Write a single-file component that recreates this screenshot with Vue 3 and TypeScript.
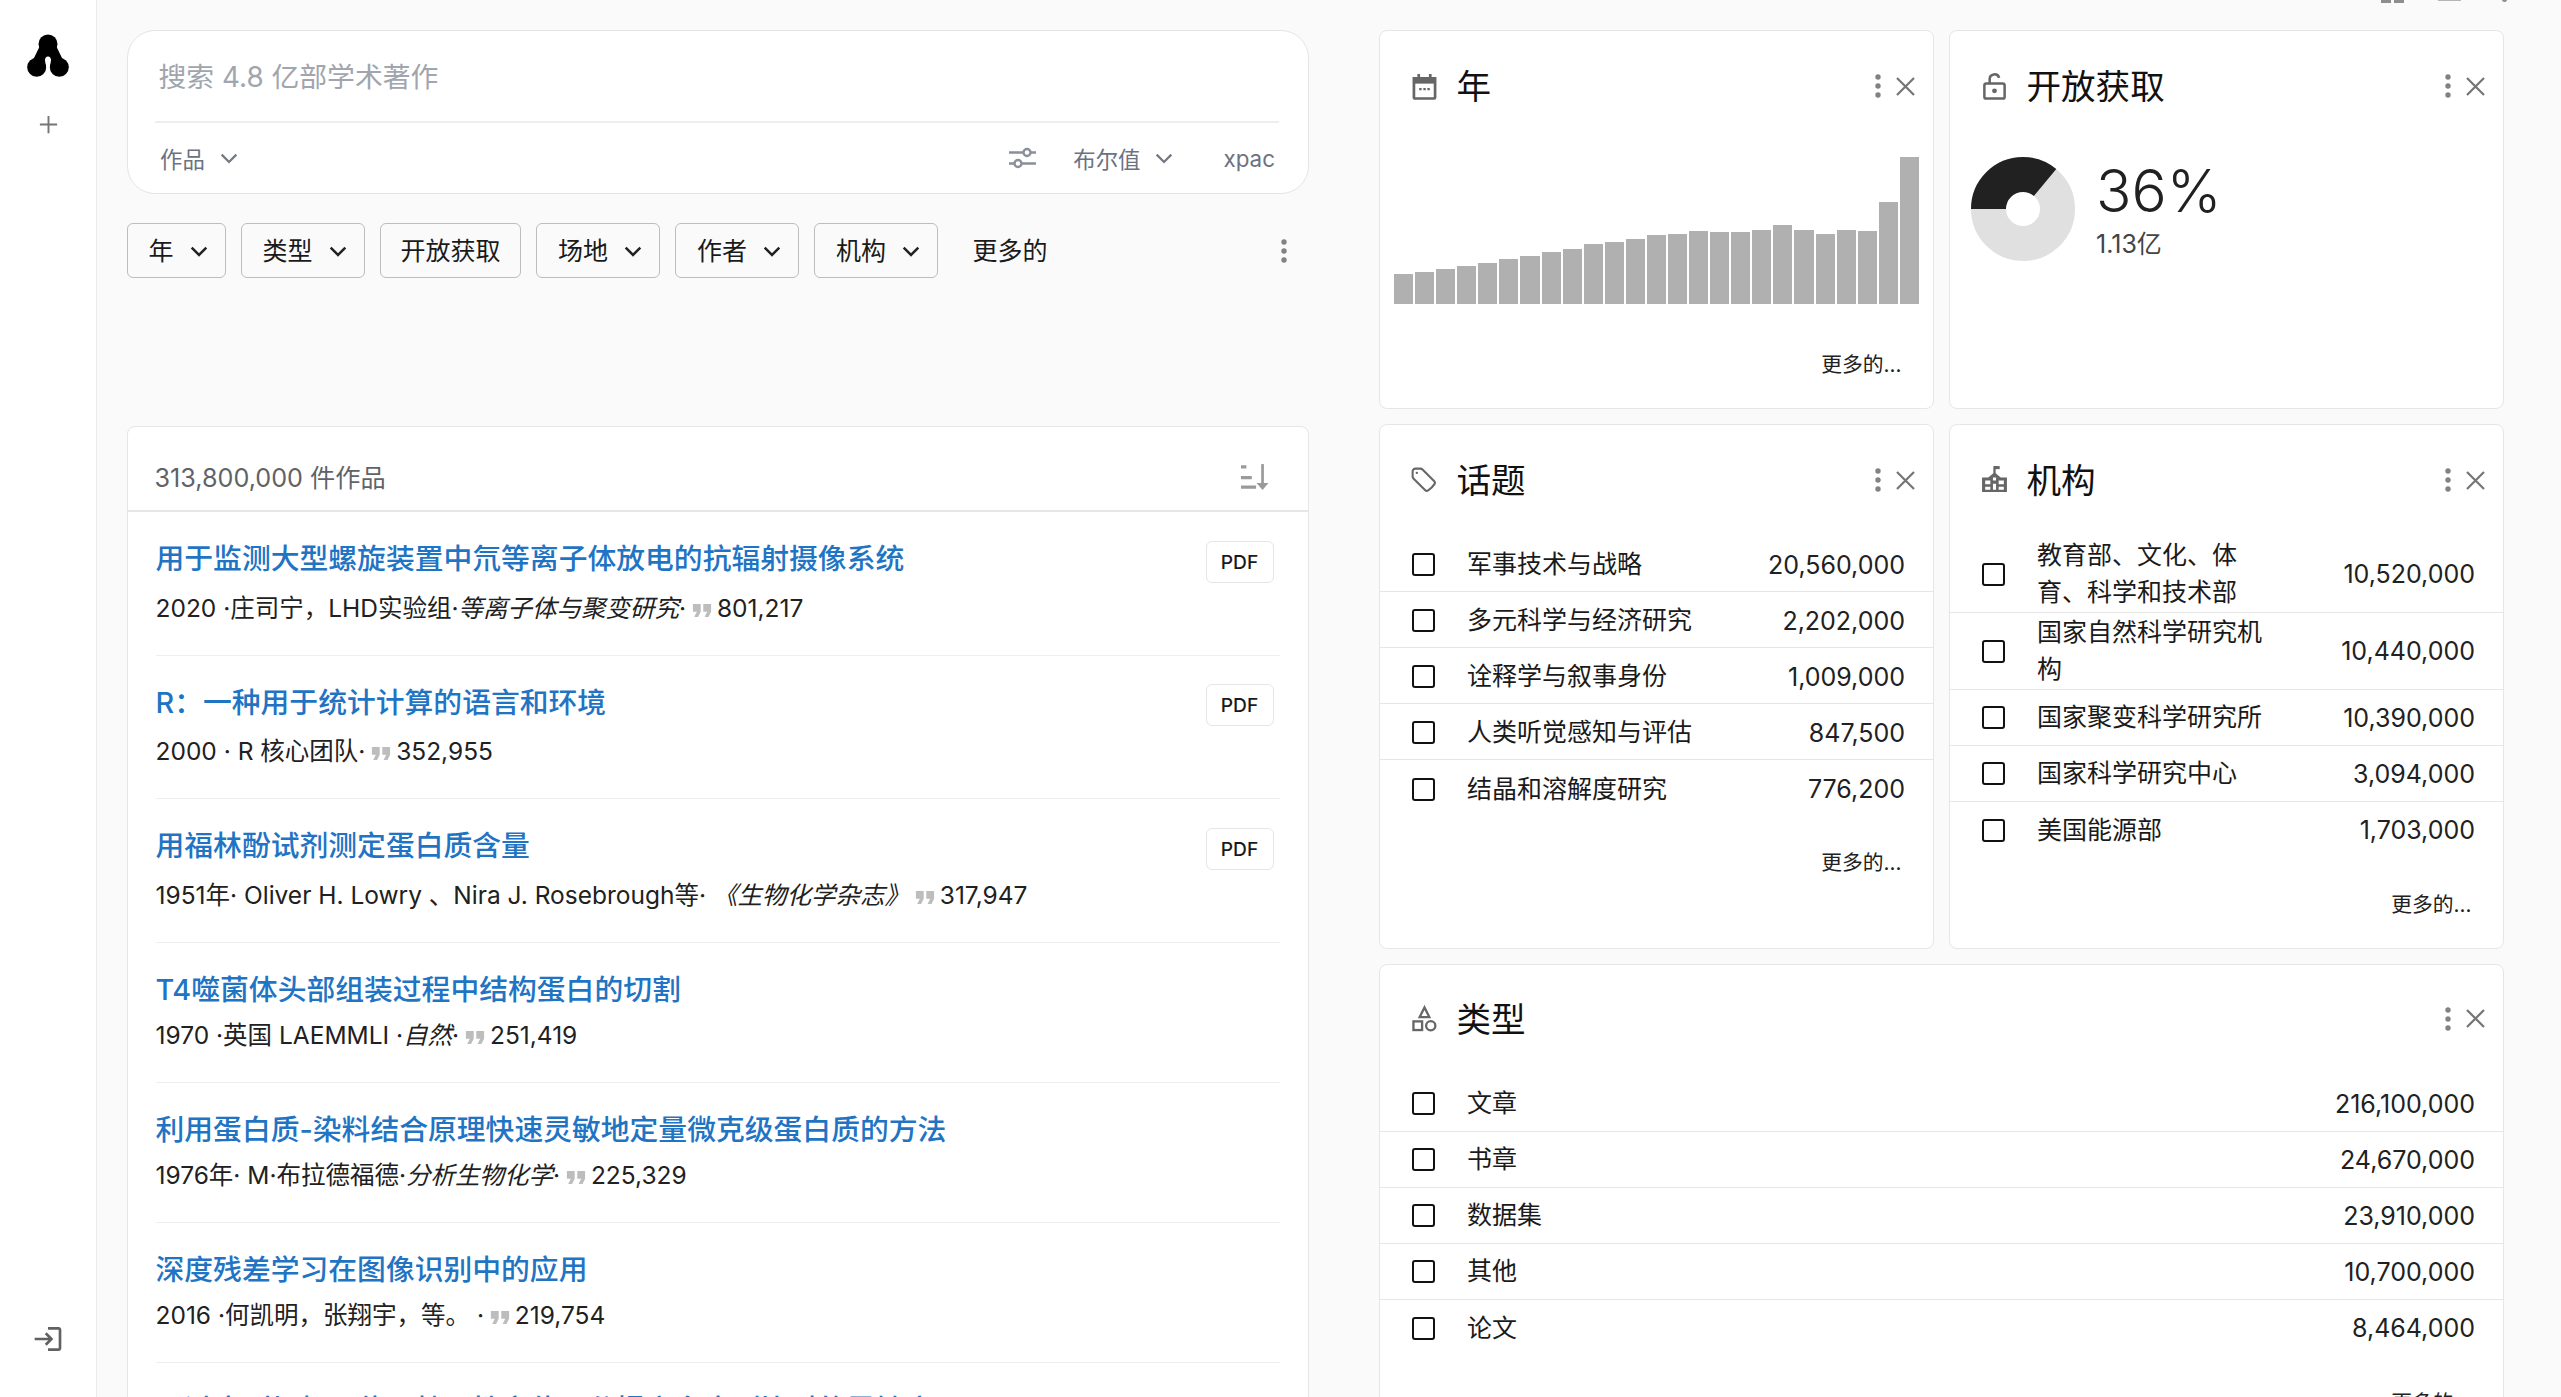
<script setup lang="ts">
interface Work {
  title: string
  pre: string
  venue?: string
  post?: string
  cites?: string
  pdf?: boolean
}
interface Item {
  label: string
  value: string
}

const filters = [
  { label: '年', menu: true },
  { label: '类型', menu: true },
  { label: '开放获取', menu: false },
  { label: '场地', menu: true },
  { label: '作者', menu: true },
  { label: '机构', menu: true },
]

const works: Work[] = [
  { title: '用于监测大型螺旋装置中氘等离子体放电的抗辐射摄像系统', pre: '2020 ·庄司宁，LHD实验组·', venue: '等离子体与聚变研究', post: '·', cites: '801,217', pdf: true },
  { title: 'R：一种用于统计计算的语言和环境', pre: '2000 · R 核心团队·', cites: '352,955', pdf: true },
  { title: '用福林酚试剂测定蛋白质含量', pre: '1951年· Oliver H. Lowry 、Nira J. Rosebrough等· ', venue: '《生物化学杂志》', cites: '317,947', pdf: true },
  { title: 'T4噬菌体头部组装过程中结构蛋白的切割', pre: '1970 ·英国 LAEMMLI ·', venue: '自然', post: '·', cites: '251,419' },
  { title: '利用蛋白质-染料结合原理快速灵敏地定量微克级蛋白质的方法', pre: '1976年· M·布拉德福德·', venue: '分析生物化学', post: '·', cites: '225,329' },
  { title: '深度残差学习在图像识别中的应用', pre: '2016 ·何凯明，张翔宇，等。 ·', cites: '219,754' },
  { title: '通过序列加权、位置特异性空位罚分提高多序列比对的灵敏度', pre: '' },
]

const topics: Item[] = [
  { label: '军事技术与战略', value: '20,560,000' },
  { label: '多元科学与经济研究', value: '2,202,000' },
  { label: '诠释学与叙事身份', value: '1,009,000' },
  { label: '人类听觉感知与评估', value: '847,500' },
  { label: '结晶和溶解度研究', value: '776,200' },
]
const institutions: Item[] = [
  { label: '教育部、文化、体育、科学和技术部', value: '10,520,000' },
  { label: '国家自然科学研究机构', value: '10,440,000' },
  { label: '国家聚变科学研究所', value: '10,390,000' },
  { label: '国家科学研究中心', value: '3,094,000' },
  { label: '美国能源部', value: '1,703,000' },
]
const types: Item[] = [
  { label: '文章', value: '216,100,000' },
  { label: '书章', value: '24,670,000' },
  { label: '数据集', value: '23,910,000' },
  { label: '其他', value: '10,700,000' },
  { label: '论文', value: '8,464,000' },
]

const barTops = [822, 816, 807, 798, 789, 777, 768, 756, 747, 732, 726, 717, 705, 702, 693, 696, 696, 690, 675, 690, 702, 690, 693, 606, 470]
const bars = barTops.map((t) => (912 - t) / 3)
</script>

<template>
  <div class="app">
    <aside class="side">
      <svg class="logo" viewBox="0 0 48 48">
        <path d="M24 12 12.7 35.3M24 12 35.3 35.3" stroke="#000" stroke-width="13" fill="none" />
        <circle cx="24" cy="12" r="9.5" fill="#000" />
        <circle cx="12.7" cy="35.3" r="9.5" fill="#000" />
        <circle cx="35.3" cy="35.3" r="9.5" fill="#000" />
        <path d="M24 24.5c-2.2 0-3 2-3 3.6 0 3 1.6 5.5 1.6 8v8h2.8v-8c0-2.5 1.6-5 1.6-8 0-1.600-.8-3.600-3-3.600Z" fill="#fff" />
      </svg>
      <svg class="plus" viewBox="0 0 24 24"><path d="M12 3v18M3 12h18" stroke="#757575" stroke-width="2" fill="none" /></svg>
      <svg class="login" viewBox="0 0 24 24"><path fill="#616161" d="M11 7 9.6 8.400l2.600 2.600H2v2h10.200l-2.600 2.600L11 17l5-5-5-5zm9 12h-8v2h8c1.100 0 2-.9 2-2V5c0-1.100-.9-2-2-2h-8v2h8v14z" /></svg>
    </aside>

    <main class="main">
      <div class="topicons">
        <span class="ti-grid"><i></i><i></i></span>
        <span class="ti-bar"></span>
        <span class="ti-dot"></span>
      </div>

      <section class="left">
        <div class="search">
          <div class="search-input">搜索 4.8 亿部学术著作</div>
          <div class="search-opts">
            <span class="opt">作品<svg class="chev" viewBox="0 0 16 16"><path d="M1.500 5 8 11.500 14.500 5" /></svg></span>
            <span class="grow"></span>
            <svg class="tune" viewBox="0 0 27 22"><path d="M0 5.500h15M21 5.500h6M0 16.500h6M12 16.500h15" stroke="#8a8f98" stroke-width="2.600" fill="none" /><circle cx="18" cy="5.500" r="3.500" stroke="#8a8f98" stroke-width="2.400" fill="none" /><circle cx="9" cy="16.500" r="3.500" stroke="#8a8f98" stroke-width="2.400" fill="none" /></svg>
            <span class="opt opt-bool">布尔值<svg class="chev" viewBox="0 0 16 16"><path d="M1.500 5 8 11.500 14.500 5" /></svg></span>
            <span class="opt opt-x">xpac</span>
          </div>
        </div>

        <div class="chips">
          <button v-for="f in filters" :key="f.label" class="chip" type="button">
            <span class="chip-text">{{ f.label }}</span>
            <svg v-if="f.menu" class="chev dark" viewBox="0 0 16 16"><path d="M1.500 5 8 11.500 14.500 5" /></svg>
          </button>
          <span class="chip-more chip-text">更多的</span>
          <span class="grow"></span>
          <svg class="dots chip-dots" viewBox="0 0 6 24"><circle cx="3" cy="3" r="2.700" /><circle cx="3" cy="12" r="2.700" /><circle cx="3" cy="21" r="2.700" /></svg>
        </div>

        <div class="results">
          <div class="res-head">
            <span>313,800,000 件作品</span>
            <svg class="sort" viewBox="0 0 26 24"><path d="M0 2.500h5M0 12.500h10M0 21.500h14" stroke="#9a9a9a" stroke-width="3" fill="none" /><path d="M20 0v19" stroke="#9a9a9a" stroke-width="2.500" fill="none" /><path d="M14.500 17.500h11L20 24z" fill="#9a9a9a" /></svg>
          </div>
          <article v-for="w in works" :key="w.title" class="work" :class="{ 'has-pdf': w.pdf }">
            <div class="work-top">
              <a class="work-title">{{ w.title }}</a>
              <span v-if="w.pdf" class="pdf">PDF</span>
            </div>
            <div class="work-meta">
              {{ w.pre }}<em v-if="w.venue">{{ w.venue }}</em>{{ w.post }}
              <svg v-if="w.cites" class="quote" viewBox="5 7 14 10"><path d="M6 17h3l2-4V7H5v6h3zm8 0h3l2-4V7h-6v6h3z" /></svg>
              {{ w.cites }}
            </div>
          </article>
        </div>
      </section>

      <section class="right">
        <div class="card c-year">
          <header class="card-head">
            <svg class="ico" viewBox="0 0 26 28"><path d="M2 5.500h22v20a1 1 0 0 1-1 1H3a1 1 0 0 1-1-1z" fill="none" stroke="#666" stroke-width="2.800" /><path d="M1 4.500h24V11H1z" fill="#666" /><path d="M7 1v5M19 1v5" stroke="#666" stroke-width="2.800" /><path d="M7.500 15.500h2.500v2.500H7.500zM11.800 15.500h2.500v2.500h-2.500zM16 15.500h2.500v2.500H16z" fill="#666" /></svg>
            <h2>年</h2>
            <span class="grow"></span>
            <svg class="dots" viewBox="0 0 6 24"><circle cx="3" cy="3" r="2.700" /><circle cx="3" cy="12" r="2.700" /><circle cx="3" cy="21" r="2.700" /></svg>
            <svg class="close" viewBox="0 0 19 19"><path d="m1 1 17 17M18 1 1 18" stroke="#757575" stroke-width="2.200" fill="none" /></svg>
          </header>
          <div class="hist">
            <span v-for="(h, i) in bars" :key="i" class="bar" :style="{ height: h + 'px' }"></span>
          </div>
          <div class="more">更多的...</div>
        </div>

        <div class="card c-oa">
          <header class="card-head">
            <svg class="ico" viewBox="0 0 24 28"><rect x="1.500" y="11" width="21" height="15.500" rx="2" fill="none" stroke="#666" stroke-width="2.600" /><path d="M7 11V6.500a5 5 0 0 1 9.800-1.500" fill="none" stroke="#666" stroke-width="2.600" /><circle cx="12" cy="18.500" r="2.500" fill="#666" /></svg>
            <h2>开放获取</h2>
            <span class="grow"></span>
            <svg class="dots" viewBox="0 0 6 24"><circle cx="3" cy="3" r="2.700" /><circle cx="3" cy="12" r="2.700" /><circle cx="3" cy="21" r="2.700" /></svg>
            <svg class="close" viewBox="0 0 19 19"><path d="m1 1 17 17M18 1 1 18" stroke="#757575" stroke-width="2.200" fill="none" /></svg>
          </header>
          <div class="oa">
            <svg class="donut" viewBox="0 0 104 104">
              <circle cx="52" cy="52" r="34.500" fill="none" stroke="#e0e0e0" stroke-width="35" />
              <circle cx="52" cy="52" r="34.500" fill="none" stroke="#212121" stroke-width="35" stroke-dasharray="78.040 216.770" transform="rotate(180 52 52)" />
            </svg>
            <div class="oa-text">
              <div class="oa-pct">36%</div>
              <div class="oa-num">1.13亿</div>
            </div>
          </div>
        </div>

        <div class="card c-list">
          <header class="card-head">
            <svg class="ico ico-tag" viewBox="0 0 24 24"><path d="M9.568 3H5.250A2.250 2.250 0 0 0 3 5.250v4.318c0 .597.237 1.170.659 1.591l9.581 9.581c.699.699 1.780.872 2.607.330a18.095 18.095 0 0 0 5.223-5.223c.542-.827.369-1.908-.330-2.607L11.160 3.660A2.250 2.250 0 0 0 9.568 3Z" fill="none" stroke="#666" stroke-width="1.700" /><circle cx="6.500" cy="6.500" r="1" fill="#666" /></svg>
            <h2>话题</h2>
            <span class="grow"></span>
            <svg class="dots" viewBox="0 0 6 24"><circle cx="3" cy="3" r="2.700" /><circle cx="3" cy="12" r="2.700" /><circle cx="3" cy="21" r="2.700" /></svg>
            <svg class="close" viewBox="0 0 19 19"><path d="m1 1 17 17M18 1 1 18" stroke="#757575" stroke-width="2.200" fill="none" /></svg>
          </header>
          <ul class="rows rows-topics">
            <li v-for="t in topics" :key="t.label" class="row">
              <span class="check"></span><span class="label">{{ t.label }}</span><span class="value">{{ t.value }}</span>
            </li>
          </ul>
          <div class="more">更多的...</div>
        </div>

        <div class="card c-list">
          <header class="card-head">
            <svg class="ico ico-inst" viewBox="0 0 28 28"><path d="M14 1v7" stroke="#666" stroke-width="2.200" /><path d="M14 1h5v3h-5z" fill="#666" /><path d="m14 7 6 5h6v14H2V12h6z" fill="#666" /><path d="M5 15h5v3.500H5zM5 21h5v3H5zM18 15h5v3.500h-5zM18 21h5v3h-5zM12.500 12h3v3h-3zM12.500 18h3v6h-3z" fill="#fff" /></svg>
            <h2>机构</h2>
            <span class="grow"></span>
            <svg class="dots" viewBox="0 0 6 24"><circle cx="3" cy="3" r="2.700" /><circle cx="3" cy="12" r="2.700" /><circle cx="3" cy="21" r="2.700" /></svg>
            <svg class="close" viewBox="0 0 19 19"><path d="m1 1 17 17M18 1 1 18" stroke="#757575" stroke-width="2.200" fill="none" /></svg>
          </header>
          <ul class="rows">
            <li v-for="t in institutions" :key="t.label" class="row">
              <span class="check"></span><span class="label">{{ t.label }}</span><span class="value">{{ t.value }}</span>
            </li>
          </ul>
          <div class="more">更多的...</div>
        </div>

        <div class="card c-wide">
          <header class="card-head">
            <svg class="ico" viewBox="0 0 26 27"><path d="M13 2 18 12H8z" fill="none" stroke="#666" stroke-width="2.400" /><rect x="1.500" y="16.500" width="9" height="9" fill="none" stroke="#666" stroke-width="2.400" /><circle cx="19.500" cy="21" r="4.800" fill="none" stroke="#666" stroke-width="2.400" /></svg>
            <h2>类型</h2>
            <span class="grow"></span>
            <svg class="dots" viewBox="0 0 6 24"><circle cx="3" cy="3" r="2.700" /><circle cx="3" cy="12" r="2.700" /><circle cx="3" cy="21" r="2.700" /></svg>
            <svg class="close" viewBox="0 0 19 19"><path d="m1 1 17 17M18 1 1 18" stroke="#757575" stroke-width="2.200" fill="none" /></svg>
          </header>
          <ul class="rows">
            <li v-for="t in types" :key="t.label" class="row">
              <span class="check"></span><span class="label">{{ t.label }}</span><span class="value">{{ t.value }}</span>
            </li>
          </ul>
          <div class="more">更多的...</div>
        </div>
      </section>
    </main>
  </div>
</template>

<style scoped>
* { box-sizing: border-box; }
.app {
  display: flex;
  width: 2561px;
  height: 1397px;
  overflow: hidden;
  background: #fafafa;
  color: #1a1a1a;
  font-family: Inter, "Noto Sans CJK SC", sans-serif;
  font-size: 25px;
}
.grow { flex: 1; }

.side {
  width: 97px;
  flex: none;
  height: 100%;
  background: #fff;
  border-right: 1px solid #ececec;
  display: flex;
  flex-direction: column;
  align-items: center;
  padding-top: 32px;
}
.logo { width: 48px; height: 48px; }
.plus { width: 23px; height: 23px; margin-top: 33px; }
.login { width: 32px; height: 32px; margin-top: auto; margin-bottom: 42px; }

.main {
  position: relative;
  flex: 1;
  display: flex;
  align-items: flex-start;
  padding: 30px 0 0 29.500px;
  gap: 70px;
}
.topicons { position: absolute; top: 0; left: 0; width: 100%; height: 6px; }
.ti-grid { position: absolute; left: 2284px; top: 0; display: flex; gap: 3px; }
.ti-grid i { display: block; width: 10px; height: 3px; background: #8e8e8e; }
.ti-bar { position: absolute; left: 2341px; top: 0; width: 23px; height: 1px; background: #b5b5b5; }
.ti-dot { position: absolute; left: 2405px; top: -2px; width: 5px; height: 4px; border-radius: 50%; background: #8e8e8e; }

.left { width: 1182.500px; flex: none; }
.search {
  height: 164px;
  background: #fff;
  border: 1px solid #e4e4e4;
  border-radius: 28px;
  padding: 0 29px 0 27px;
}
.search-input {
  height: 92px;
  padding: 3px 0 0 4px;
  display: flex;
  align-items: center;
  border-bottom: 2px solid #eee;
  color: #a1a5ad;
  font-size: 27.840px;
  line-height: 1;
}
.search-opts {
  display: flex;
  align-items: center;
  height: 70px;
  color: #6b7280;
  font-size: 22.400px;
  padding: 0 4px 0 5.500px;
}
.opt { display: inline-flex; align-items: center; }
.chev {
  width: 18px;
  height: 18px;
  margin-left: 15px;
  fill: none;
  stroke: #737982;
  stroke-width: 2;
  flex: none;
}
.chev.dark { stroke: #222; stroke-width: 2.200; margin-left: 16px; }
.tune { width: 27px; height: 22px; margin-right: 37px; }
.opt-bool { margin-right: 50px; }
.opt-x { color: #6b7280; }

.chips { display: flex; align-items: center; gap: 15px; margin-top: 29px; height: 55px; }
.chip {
  height: 55px;
  padding: 0 17px 0 21px;
  display: inline-flex;
  align-items: center;
  background: #fafafa;
  border: 1px solid #bdbdbd;
  border-radius: 6px;
  font: inherit;
  color: #1a1a1a;
  white-space: nowrap;
}
.chip:nth-child(3) { padding: 0 19.500px 0 20px; }
.chip-text { position: relative; top: -1.500px; }
.chip-more { margin-left: 19.500px; }
.dots { width: 6px; height: 24px; fill: #828282; flex: none; }
.chip-dots { margin-right: 22px; }

.results {
  margin-top: 148px;
  background: #fff;
  border: 1px solid #e6e6e6;
  border-radius: 8px 8px 0 0;
  height: 1200px;
  padding: 0 28px;
}
.res-head {
  height: 85px;
  margin: 0 -28px;
  padding: 14px 39px 0 27px;
  display: flex;
  align-items: center;
  justify-content: space-between;
  border-bottom: 2px solid #e6e6e6;
  color: #5f6368;
  font-size: 25.200px;
}
.sort { width: 28px; height: 26px; margin-top: 3px; }
.work {
  border-bottom: 1px solid #eee;
  padding: 27px 0 22px;
}
.work-top { display: flex; justify-content: space-between; align-items: flex-start; }
.work-title {
  font-size: 28.800px;
  line-height: 40px;
  font-weight: 500;
  color: #1f74c4;
}
.pdf {
  margin: 1.500px 6.500px 0 0;
  width: 68px;
  height: 42px;
  display: flex;
  align-items: center;
  justify-content: center;
  border: 1px solid #e6e6e6;
  border-radius: 6px;
  font-size: 19.200px;
  font-weight: 500;
}
.work-meta {
  font-size: 24.500px;
  line-height: 50px;
  height: 50px;
  white-space: nowrap;
  color: #212121;
}
.work-meta em { font-style: italic; }
.quote { width: 20px; height: 13px; fill: #bdbdbd; margin: 0 -2px 0 -1px; }

.right {
  width: 1125px;
  flex: none;
  display: grid;
  grid-template-columns: 555px 555px;
  column-gap: 15px;
  row-gap: 15px;
}
.card {
  background: #fff;
  border: 1px solid #e6e6e6;
  border-radius: 8px;
  padding-top: 27px;
}
.c-year, .c-oa { height: 379px; }
.c-list { height: 525px; }
.c-wide { grid-column: 1 / 3; height: 500px; padding-top: 25.500px; }
.c-wide .rows { margin-top: 29.500px; }
.card-head {
  display: flex;
  align-items: center;
  height: 56px;
  padding: 0 18px 0 32px;
}
.card-head h2 {
  margin: -4px 0 0 19.500px;
  font-size: 34.560px;
  font-weight: 400;
  color: #111;
}
.ico { width: 25px; height: 27px; flex: none; }
.ico-tag { width: 29px; height: 29px; margin: -2px -1px 0 -3px; }
.ico-inst { width: 29px; height: 29px; margin: -2px -2px 0 -2px; }
.close { width: 19px; height: 19px; margin-left: 15.500px; flex: none; }

.hist {
  display: flex;
  align-items: flex-end;
  gap: 2px;
  height: 147px;
  margin: 43px 14px 0;
}
.bar { flex: 1; background: #b0b0b0; }
.more {
  height: 30px;
  margin-top: 46px;
  padding-right: 31.500px;
  text-align: right;
  font-size: 20.800px;
  line-height: 30px;
  color: #212121;
}
.c-list .more, .c-wide .more { margin-top: 32px; }

.oa { display: flex; align-items: flex-start; margin: 43px 0 0 21px; gap: 21px; }
.donut { width: 104px; height: 104px; flex: none; }
.oa-pct { font-size: 58.500px; font-weight: 300; line-height: 68px; margin-top: 0; color: #212121; }
.oa-num { font-size: 25px; line-height: 30px; margin-top: 4px; color: #444; }

.rows { list-style: none; margin: 28px 0 0; padding: 0; }
.row {
  display: flex;
  align-items: center;
  min-height: 56px;
  padding: 1px 28px 1px 32px;
  border-bottom: 1px solid #e6e6e6;
  justify-content: flex-start;
}
.rows-topics .row { padding-top: 3px; }
.row:last-child { border-bottom: none; }
.check {
  flex: none;
  width: 23px;
  height: 23px;
  border: 2.500px solid #111;
  border-radius: 3px;
  margin-right: 32px;
}
.label { max-width: 240px; line-height: 37px; color: #1a1a1a; }
.value { margin-left: auto; white-space: nowrap; color: #212121; }
</style>

<style>
html, body { margin: 0; background: #fafafa; overflow: hidden; }
</style>
